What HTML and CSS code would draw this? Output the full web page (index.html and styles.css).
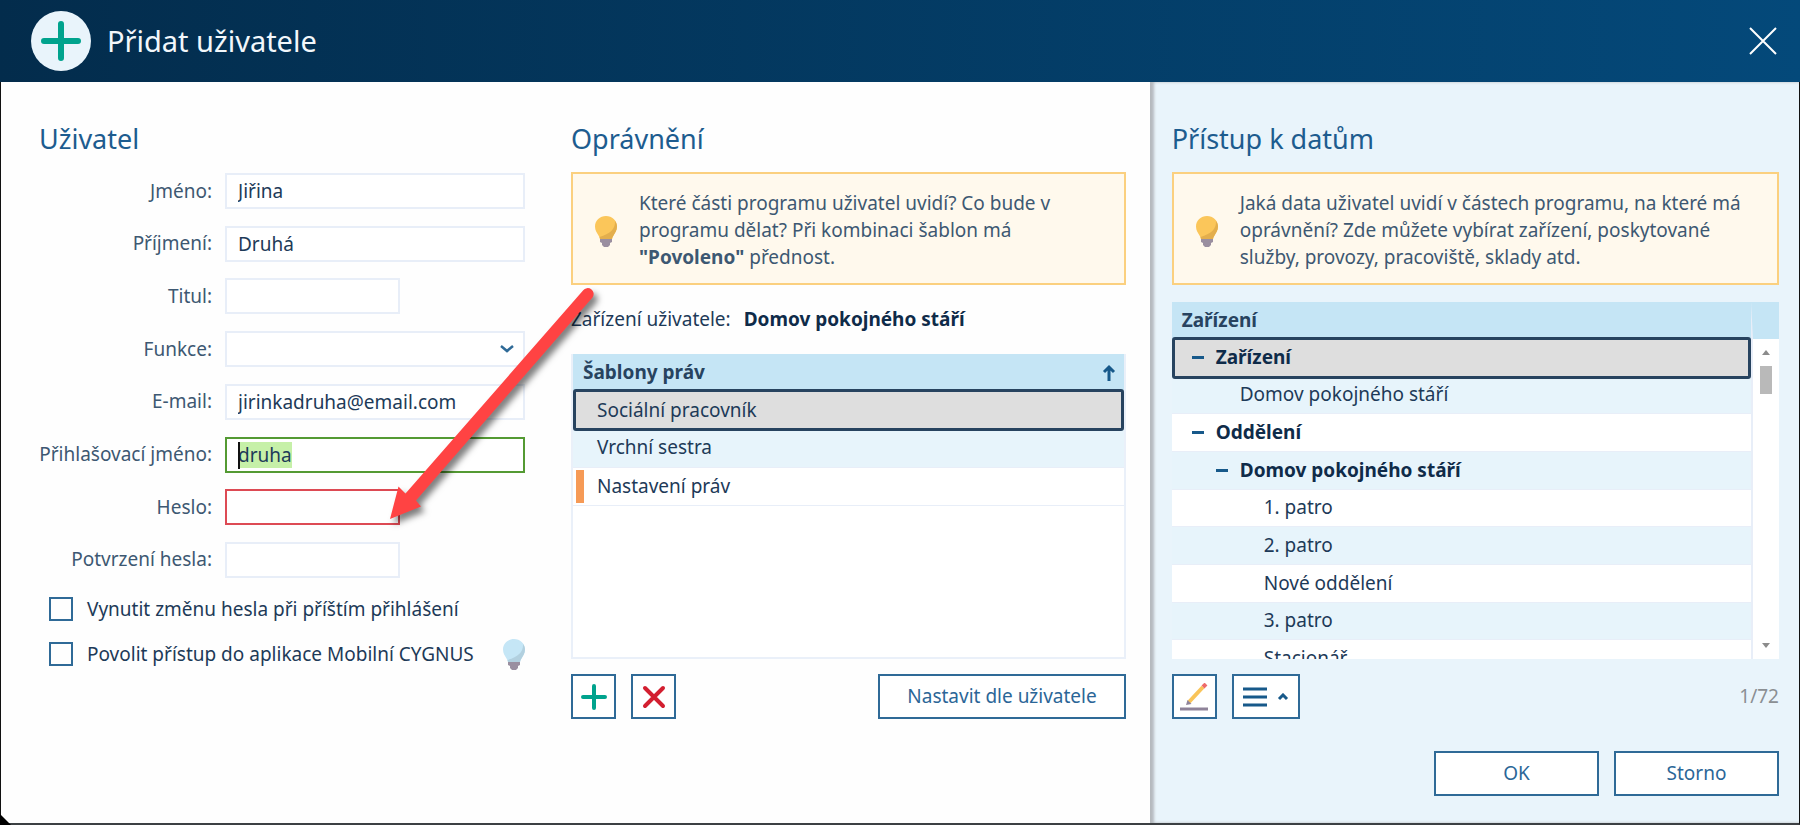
FILE: index.html
```
<!DOCTYPE html>
<html lang="cs">
<head>
  <meta charset="utf-8">
  <title>Přidat uživatele</title>
  <meta name="viewport" content="width=device-width, initial-scale=1.0">
  <link rel="stylesheet" href="styles.css">
</head>
<body>
  <svg class="defs" width="0" height="0" aria-hidden="true">
    <symbol id="bulb" viewBox="0 0 22 32">
      <path class="bulb-glass" d="M11 1C5 1 0 5.500 0 11.500c0 4 2 6.500 3.500 9 .8 1.300 1.300 2.500 1.500 3.500h12c.2-1 .7-2.200 1.500-3.500C20 18 22 15.500 22 11.500 22 5.500 17 1 11 1z"/>
      <path class="bulb-shade" d="M20 6c.5 8-5 13-15.500 16l.5 2h12c.2-1 .7-2.200 1.500-3.500C20 18 22 15.500 22 11.500c0-2-.8-4-2-5.500z"/>
      <path fill="#9a8fa0" d="M5 24h12v3l-2 1v2l-2 2H9l-2-2v-2l-2-1z"/>
    </symbol>
  </svg>

  <div class="dialog">
    <header class="header">
      <span class="header-icon">
        <svg width="40" height="40" viewBox="0 0 40 40"><path d="M20 3v34M3 20h34" stroke="#00a38d" stroke-width="6" stroke-linecap="round"/></svg>
      </span>
      <h1>Přidat uživatele</h1>
      <button class="close" aria-label="Zavřít">
        <svg width="30" height="30" viewBox="0 0 30 30"><path d="M2 2l26 26M28 2L2 28" stroke="#fff" stroke-width="2"/></svg>
      </button>
    </header>

    <main class="content">
      <div class="main-part">
        <section class="user">
          <h2>Uživatel</h2>
          <div class="fields">
            <div class="field"><label for="first">Jméno:</label><input id="first" type="text" value="Jiřina"></div>
            <div class="field"><label for="last">Příjmení:</label><input id="last" type="text" value="Druhá"></div>
            <div class="field"><label for="degree">Titul:</label><input id="degree" class="short" type="text"></div>
            <div class="field">
              <label for="role">Funkce:</label>
              <span class="select-wrap">
                <select id="role"><option></option></select>
                <svg width="16" height="10" viewBox="0 0 16 10"><path d="M2 2l6 5 6-5" fill="none" stroke="#2f6a97" stroke-width="2.500"/></svg>
              </span>
            </div>
            <div class="field"><label for="email">E-mail:</label><input id="email" type="text" value="jirinkadruha@email.com"></div>
            <div class="field"><label for="login">Přihlašovací jméno:</label><span class="caret-wrap"><input id="login" class="active" type="text" value="druha" autofocus></span></div>
            <div class="field"><label for="pass">Heslo:</label><input id="pass" class="short error" type="password"></div>
            <div class="field"><label for="pass2">Potvrzení hesla:</label><input id="pass2" class="short" type="password"></div>
          </div>
          <div class="checks">
            <label class="check"><input type="checkbox">Vynutit změnu hesla při příštím přihlášení</label>
            <div class="check-row">
              <label class="check"><input type="checkbox">Povolit přístup do aplikace Mobilní CYGNUS</label>
              <svg class="bulb blue" width="22" height="32"><use href="#bulb"/></svg>
            </div>
          </div>
        </section>

        <section class="rights">
          <h2>Oprávnění</h2>
          <div class="info">
            <svg class="bulb" width="22" height="32"><use href="#bulb"/></svg>
            <p>Které části programu uživatel uvidí? Co bude v programu dělat? Při kombinaci šablon má <b>"Povoleno"</b> přednost.</p>
          </div>
          <p class="facility">Zařízení uživatele: <b>Domov pokojného stáří</b></p>
          <div class="list templates">
            <table>
              <thead>
                <tr><th>Šablony práv
                  <svg class="sort" width="14" height="18" viewBox="0 0 14 18"><path d="M7 17V3M2 8l5-5 5 5" fill="none" stroke="#17598a" stroke-width="3"/></svg>
                </th></tr>
              </thead>
              <tbody>
                <tr class="selected"><td>Sociální pracovník</td></tr>
                <tr><td>Vrchní sestra</td></tr>
                <tr><td class="marked">Nastavení práv</td></tr>
              </tbody>
            </table>
          </div>
          <div class="toolbar">
            <button class="btn icon" aria-label="Přidat">
              <svg width="26" height="26" viewBox="0 0 26 26"><path d="M13 2v22M2 13h22" stroke="#00a38d" stroke-width="4" stroke-linecap="round"/></svg>
            </button>
            <button class="btn icon" aria-label="Odebrat">
              <svg width="26" height="26" viewBox="0 0 26 26"><path d="M4 4l18 18M22 4L4 22" stroke="#d31f30" stroke-width="4" stroke-linecap="round"/></svg>
            </button>
            <button class="btn set">Nastavit dle uživatele</button>
          </div>
        </section>
      </div>

      <section class="access">
        <h2>Přístup k datům</h2>
        <div class="info">
          <svg class="bulb" width="22" height="32"><use href="#bulb"/></svg>
          <p>Jaká data uživatel uvidí v částech programu, na které má oprávnění? Zde můžete vybírat zařízení, poskytované služby, provozy, pracoviště, sklady atd.</p>
        </div>
        <div class="list tree">
          <table>
            <thead>
              <tr><th>Zařízení</th></tr>
            </thead>
            <tbody>
              <tr class="selected"><td class="l1 node">Zařízení</td></tr>
              <tr><td class="l2">Domov pokojného stáří</td></tr>
              <tr><td class="l1 node">Oddělení</td></tr>
              <tr><td class="l2 node">Domov pokojného stáří</td></tr>
              <tr><td class="l3">1. patro</td></tr>
              <tr><td class="l3">2. patro</td></tr>
              <tr><td class="l3">Nové oddělení</td></tr>
              <tr><td class="l3">3. patro</td></tr>
              <tr><td class="l3">Stacionář</td></tr>
            </tbody>
          </table>
          <div class="scrollbar">
            <svg width="8" height="5" viewBox="0 0 8 5"><path d="M0 5l4-5 4 5z" fill="#8b8b8b"/></svg>
            <div class="thumb"></div>
            <svg class="down" width="8" height="5" viewBox="0 0 8 5"><path d="M0 0l4 5 4-5z" fill="#8b8b8b"/></svg>
          </div>
        </div>
        <div class="toolbar">
          <button class="btn icon" aria-label="Upravit">
            <svg width="28" height="28" viewBox="0 0 28 28">
              <path d="M0 26h28" stroke="#8f8399" stroke-width="3"/>
              <path d="M9 19L23 4" stroke="#f9c459" stroke-width="4"/>
              <path d="M23 4l3-3" stroke="#ee6a6a" stroke-width="4"/>
              <path d="M6 22l1.500-5 4 4z" fill="#8f8399"/>
            </svg>
          </button>
          <button class="btn menu" aria-label="Nabídka">
            <svg width="24" height="20" viewBox="0 0 24 20"><path d="M0 2h24M0 10h24M0 18h24" stroke="#17598a" stroke-width="3"/></svg>
            <svg width="12" height="8" viewBox="0 0 12 8"><path d="M2 6l4-4 4 4" fill="none" stroke="#17598a" stroke-width="3"/></svg>
          </button>
          <span class="count">1/72</span>
        </div>
        <div class="footer">
          <button class="btn">OK</button>
          <button class="btn">Storno</button>
        </div>
      </section>
    </main>

    <svg class="arrow" width="240" height="260" viewBox="0 0 240 260">
      <path d="M203 10.500a5.500 5.500 0 0 1 9.500 7L36 220.500l5 6L10 239l8.500-32.500 7 7z" fill="#ff4343"/>
    </svg>
  </div>

  <script>
    document.getElementById('login').select();
  </script>
</body>
</html>
```

FILE: styles.css
```
* {
  box-sizing: border-box;
}

body {
  margin: 0;
  font: 19px/27px "Noto Sans", "Open Sans", sans-serif;
  color: #1d3a58;
}

input, select, button {
  font: inherit;
  color: inherit;
}

h1, h2, p {
  margin: 0;
  font-weight: 400;
}

.defs {
  position: absolute;
}

.dialog {
  position: relative;
  display: flex;
  flex-direction: column;
  min-height: 100vh;
}

.header {
  display: flex;
  align-items: center;
  gap: 16px;
  height: 82px;
  padding: 0 22px 0 31px;
  background: linear-gradient(to right, #032c4c, #04497a);
}

.header-icon {
  display: flex;
  align-items: center;
  justify-content: center;
  width: 60px;
  height: 60px;
  border-radius: 50%;
  background: #e9f4fb;
}

h1 {
  font-size: 29px;
  line-height: 36px;
  color: #f2f7fb;
}

.close {
  display: flex;
  margin-left: auto;
  padding: 0;
  border: 0;
  background: none;
}

.content {
  flex: 1;
  display: grid;
  grid-template-columns: 23fr 13fr;
  border: 1px solid #111;
  border-top: 0;
  border-bottom: 2px solid #3c4043;
}

.content::after {
  content: "";
  position: absolute;
  left: 0;
  bottom: 0;
  width: 11px;
  height: 11px;
  background: #000;
  clip-path: polygon(0 0, 100% 100%, 0 100%);
}

.main-part {
  display: grid;
  grid-template-columns: 486px 1fr;
  gap: 46px;
  padding: 39px 24px 24px 38px;
  background: #fefefe;
}

.access {
  padding: 39px 20px 24px 22px;
  background: #e9f4fb;
  box-shadow: inset 4px 0 3px #b5b9be;
}

h2 {
  margin-bottom: 15px;
  font-size: 27px;
  line-height: 36px;
  color: #1d5c8f;
}

/* user form */
.fields {
  display: flex;
  flex-direction: column;
  justify-content: space-between;
  height: 405px;
}

.user .fields {
  margin-top: 16px;
}

.field {
  display: flex;
  align-items: center;
  gap: 13px;
}

.field > label {
  flex: 1;
  text-align: right;
  color: #3d5872;
}

.field input, .field select {
  width: 300px;
  height: 36px;
  padding: 0 11px;
  border: 2px solid #e8eef8;
  border-radius: 0;
  background: #fff;
  outline: 0;
}

.field select {
  appearance: none;
}

.field .short {
  width: 175px;
  margin-right: 125px;
}

.field .active {
  border-color: #549a33;
}

.field .error {
  border-color: #dd4a54;
}

.active::selection {
  color: #1d3a58;
  background: #c6f0a8;
}

.select-wrap, .caret-wrap {
  position: relative;
  display: flex;
}

.select-wrap svg {
  position: absolute;
  right: 10px;
  top: 13px;
}

.caret-wrap::after {
  content: "";
  position: absolute;
  left: 13px;
  top: 5px;
  width: 2px;
  height: 27px;
  background: #111;
}

.checks {
  margin-top: 14px;
  padding-left: 10px;
}

.check {
  display: flex;
  align-items: center;
  gap: 14px;
  height: 34px;
}

.check input {
  appearance: none;
  width: 24px;
  height: 24px;
  margin: 0;
  border: 2px solid #2f6a97;
}

.check-row {
  display: flex;
  align-items: center;
  justify-content: space-between;
  margin-top: 11px;
}

.bulb {
  --glass: #fbc65a;
  --shade: #e3ae4d;
  flex: none;
}

.blue {
  --glass: #c5e6f6;
  --shade: #b2d0df;
}

.bulb-glass {
  fill: var(--glass);
}

.bulb-shade {
  fill: var(--shade);
}

/* info boxes */
.info {
  display: flex;
  align-items: center;
  gap: 22px;
  padding: 16px 22px 12px;
  border: 2px solid #fbd07f;
  background: #fff9ed;
  color: #3d5872;
}

.facility {
  margin: 21px 0;
}

.facility b {
  margin-left: 8px;
  color: #0f2b49;
}

/* lists */
.list {
  position: relative;
  display: flex;
  align-items: flex-start;
  overflow: hidden;
  background: #fff;
}

.templates {
  height: 305px;
  border: 2px solid #eaf0f9;
  border-top: 0;
}

.tree {
  height: 357px;
  margin-top: 17px;
}

table {
  flex: 1;
  height: 152px;
  border-spacing: 0;
}

.tree table {
  height: 376px;
}

th, td {
  height: 37px;
  padding: 0 8px;
  text-align: left;
}

th {
  padding-left: 10px;
  background: #c5e5f5;
  color: #27435f;
}

.sort {
  float: right;
  margin: 5px 0;
}

td {
  position: relative;
  padding-left: 24px;
  border-bottom: 1px solid #e8eef8;
}

tbody tr:nth-child(even) {
  background: #e7f4fb;
}

.selected td {
  border: 0;
  background: #dedede;
}

.selected td::after {
  content: "";
  position: absolute;
  inset: -2px 0;
  z-index: 1;
  border: 3px solid #27435f;
  border-radius: 3px;
}

.marked::before {
  content: "";
  position: absolute;
  left: 3px;
  top: 2px;
  bottom: 2px;
  width: 8px;
  background: #f69a56;
}

.l1 { padding-left: 44px; }
.l2 { padding-left: 68px; }
.l3 { padding-left: 92px; }

.node {
  font-weight: 700;
  color: #0f2b49;
}

.node::before {
  content: "";
  float: left;
  width: 12px;
  height: 3px;
  margin: 12px 0 0 -24px;
  background: #17598a;
}

.scrollbar {
  display: flex;
  flex-direction: column;
  align-items: center;
  gap: 11px;
  width: 28px;
  height: 100%;
  padding: 11px 0;
  border-top: 37px solid #c5e5f5;
  border-left: 2px solid #e8eef8;
}

.thumb {
  width: 12px;
  height: 28px;
  background: #b9b9b9;
}

.down {
  margin-top: auto;
}

/* buttons */
.btn {
  display: flex;
  align-items: center;
  justify-content: center;
  min-width: 165px;
  height: 45px;
  padding: 0 27px;
  border: 2px solid #2f6a97;
  background: #fff;
  color: #2b6697;
}

.toolbar {
  display: flex;
  align-items: center;
  gap: 15px;
  margin-top: 15px;
}

.icon {
  min-width: 45px;
  width: 45px;
  padding: 0;
}

.menu {
  min-width: 68px;
  padding: 0;
  gap: 10px;
}

.set {
  margin-left: auto;
}

.count {
  margin-left: auto;
  color: #8b8f93;
}

.footer {
  display: flex;
  justify-content: flex-end;
  gap: 15px;
  margin-top: 32px;
}

/* callout arrow over the form */
.arrow {
  position: absolute;
  left: 380px;
  top: 280px;
  overflow: visible;
  pointer-events: none;
  filter: drop-shadow(4px 5px 3px rgba(0, 0, 0, 0.5));
}
```
